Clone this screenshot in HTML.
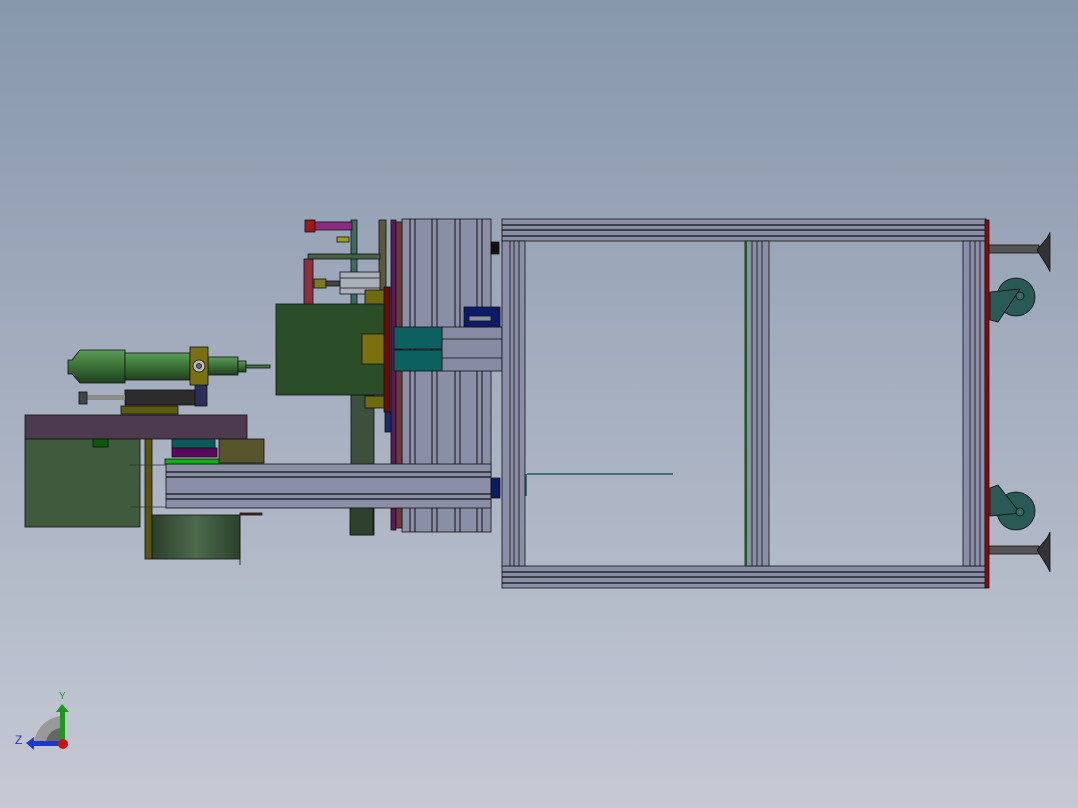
<!DOCTYPE html>
<html><head><style>
html,body{margin:0;padding:0;width:1078px;height:808px;overflow:hidden}
body{background:linear-gradient(180deg,#8797ac 0%,#a3adbe 45%,#c5c9d4 100%);font-family:"Liberation Sans",sans-serif}
svg{position:absolute;left:0;top:0}
</style></head><body>
<svg width="1078" height="808" viewBox="0 0 1078 808" stroke="#111" stroke-width="0.8">
<defs>
<linearGradient id="cyl" x1="0" y1="0" x2="0" y2="1"><stop offset="0" stop-color="#5e9a5a"/><stop offset="0.4" stop-color="#3f7a3c"/><stop offset="1" stop-color="#1f3f1f"/></linearGradient>
<linearGradient id="box" x1="0" y1="0" x2="1" y2="0"><stop offset="0" stop-color="#2c3f2c"/><stop offset="0.5" stop-color="#4d6a4c"/><stop offset="1" stop-color="#2c402c"/></linearGradient>
</defs>
<!-- top-left parts -->
<rect x="351" y="220" width="6" height="175" fill="#3e6a60"/>
<rect x="379" y="220" width="7" height="70" fill="#5a5a3a"/>
<rect x="312" y="222" width="40" height="8" fill="#8a2a80"/>
<rect x="305" y="220" width="10" height="12" fill="#9a1a1a"/>
<rect x="337" y="237" width="12" height="5" fill="#a0a020"/>
<rect x="308" y="254" width="72" height="5" fill="#466046"/>
<rect x="304" y="259" width="9" height="46" fill="#8a3040"/>
<rect x="340" y="272" width="40" height="22" fill="#aab0b8"/>
<line x1="340" y1="278" x2="380" y2="278"/><line x1="340" y1="288" x2="380" y2="288"/>
<rect x="314" y="279" width="12" height="9" fill="#7a7a20"/>
<rect x="326" y="281" width="14" height="5" fill="#444"/>
<!-- dark green vertical -->
<rect x="351" y="395" width="23" height="140" fill="#3d4f3d"/>
<!-- central column -->
<rect x="402" y="219" width="89" height="313" fill="#8a8ea6"/>
<g stroke-width="1">
<line x1="410" y1="219" x2="410" y2="532"/><line x1="415" y1="219" x2="415" y2="532"/>
<line x1="432" y1="219" x2="432" y2="532"/><line x1="437" y1="219" x2="437" y2="532"/>
<line x1="455" y1="219" x2="455" y2="532"/><line x1="460" y1="219" x2="460" y2="532"/>
<line x1="477" y1="219" x2="477" y2="532"/><line x1="482" y1="219" x2="482" y2="532"/>
</g>
<rect x="391" y="220" width="5" height="310" fill="#5a1a5a"/>
<rect x="396" y="222" width="6" height="306" fill="#6a3a3a"/>
<rect x="491" y="242" width="8" height="12" fill="#111"/>
<!-- green block -->
<rect x="276" y="304" width="109" height="91" fill="#2b4e28"/>
<rect x="365" y="290" width="20" height="14" fill="#6e6a10"/>
<rect x="362" y="334" width="23" height="30" fill="#7a7010"/>
<rect x="365" y="396" width="20" height="12" fill="#6e6a10"/>
<rect x="384" y="287" width="6" height="125" fill="#6a0c0c"/>
<rect x="385" y="412" width="6" height="20" fill="#1a2a6a"/>
<!-- teal -->
<rect x="442" y="327" width="60" height="44" fill="#868aa2"/>
<line x1="442" y1="339" x2="502" y2="339"/><line x1="442" y1="358" x2="502" y2="358"/>
<rect x="394" y="327" width="48" height="22" fill="#0c6060"/>
<rect x="394" y="350" width="48" height="21" fill="#0c6060"/>
<rect x="464" y="307" width="36" height="20" fill="#0c1a6a"/>
<rect x="469" y="316" width="22" height="5" fill="#8a8ea6"/>
<!-- horizontal beam -->
<rect x="166" y="464" width="325" height="44" fill="#8a8ea6"/>
<g stroke-width="1.3"><line x1="166" y1="472" x2="491" y2="472"/><line x1="166" y1="477" x2="491" y2="477"/>
<line x1="166" y1="494" x2="491" y2="494"/><line x1="166" y1="499" x2="491" y2="499"/></g>
<rect x="491" y="478" width="9" height="20" fill="#0c1a6a"/>
<line x1="527" y1="474" x2="673" y2="474" stroke="#1e5a5a" stroke-width="1.5"/>
<line x1="526" y1="474" x2="526" y2="496" stroke="#1e5a5a" stroke-width="1.5"/>
<rect x="350" y="508" width="23" height="27" fill="#2e402e"/>
<!-- left assembly -->
<rect x="25" y="415" width="222" height="24" fill="#4e3a4e"/>
<rect x="25" y="439" width="115" height="88" fill="#3f5a3c"/>
<rect x="93" y="439" width="15" height="8" fill="#0a5a0a"/>
<rect x="145" y="439" width="7" height="120" fill="#5a5610"/>
<rect x="152" y="515" width="88" height="44" fill="url(#box)"/>
<line x1="240" y1="515" x2="240" y2="565"/>
<rect x="240" y="513" width="22" height="2" fill="#5a2a1a"/>
<rect x="219" y="439" width="45" height="24" fill="#55542a"/>
<rect x="172" y="439" width="43" height="9" fill="#0a5a5a"/>
<rect x="172" y="448" width="45" height="9" fill="#5a0a5a"/>
<rect x="165" y="459" width="54" height="5" fill="#10b010"/>
<line x1="130" y1="465" x2="166" y2="465" stroke="#333"/><line x1="130" y1="507" x2="166" y2="507" stroke="#333"/>
<!-- spindle -->
<rect x="125" y="390" width="70" height="15" fill="#2c2c2c"/>
<rect x="85" y="395" width="40" height="5" fill="#8a8a8a" stroke="none"/>
<rect x="79" y="392" width="8" height="12" fill="#444"/>
<rect x="195" y="384" width="12" height="22" fill="#2a2e5a"/>
<rect x="121" y="406" width="57" height="8" fill="#5e5a10"/>
<path d="M68 360 L72 360 L80 350 L125 350 L125 383 L80 383 L72 374 L68 374 Z" fill="url(#cyl)"/>
<rect x="125" y="353" width="65" height="27" fill="url(#cyl)"/>
<rect x="208" y="357" width="30" height="18" fill="url(#cyl)"/>
<rect x="238" y="361" width="8" height="11" fill="url(#cyl)"/>
<rect x="246" y="365" width="24" height="3" fill="#3a7a3a"/>
<rect x="190" y="347" width="18" height="38" fill="#7a7010"/>
<circle cx="199" cy="366" r="6" fill="#bbb"/><circle cx="199" cy="366" r="2.5" fill="#666"/>
<!-- frame -->
<rect x="502" y="219" width="484" height="22" fill="#8a8ea6"/>
<g stroke-width="1.3"><line x1="502" y1="225" x2="986" y2="225"/><line x1="502" y1="230" x2="986" y2="230"/><line x1="502" y1="236" x2="986" y2="236"/></g>
<rect x="502" y="566" width="484" height="22" fill="#8a8ea6"/>
<g stroke-width="1.3"><line x1="502" y1="572" x2="986" y2="572"/><line x1="502" y1="577" x2="986" y2="577"/><line x1="502" y1="583" x2="986" y2="583"/></g>
<rect x="502" y="241" width="23" height="325" fill="#8a8ea6"/>
<line x1="510" y1="241" x2="510" y2="566"/><line x1="514" y1="241" x2="514" y2="566"/><line x1="519" y1="241" x2="519" y2="566"/>
<rect x="745" y="241" width="24" height="325" fill="#8a8ea6"/>
<line x1="746" y1="241" x2="746" y2="566" stroke="#0a6a0a" stroke-width="2"/>
<line x1="752" y1="241" x2="752" y2="566"/><line x1="757" y1="241" x2="757" y2="566"/><line x1="762" y1="241" x2="762" y2="566"/>
<rect x="963" y="241" width="22" height="325" fill="#8a8ea6"/>
<line x1="970" y1="241" x2="970" y2="566"/><line x1="975" y1="241" x2="975" y2="566"/><line x1="980" y1="241" x2="980" y2="566"/>
<rect x="985" y="220" width="4" height="368" fill="#8a0a0a"/>
<!-- feet -->
<g fill="#555">
<rect x="989" y="245" width="50" height="8"/><path d="M1037 250 L1047 238 L1050 232 L1050 272 L1047 266 Z" fill="#333"/>
<rect x="989" y="546" width="50" height="8"/><path d="M1037 550 L1047 538 L1050 532 L1050 572 L1047 566 Z" fill="#333"/>
</g>
<g fill="#2a5a55">
<circle cx="1016" cy="297" r="19"/><path d="M990 292 L1020 289 L998 322 L990 320 Z"/><circle cx="1020" cy="296" r="4" fill="#3a6a65"/>
<circle cx="1016" cy="511" r="19"/><path d="M990 488 L998 485 L1020 513 L990 516 Z"/><circle cx="1020" cy="512" r="4" fill="#3a6a65"/>
</g>
<!-- triad -->
<path d="M34 744 A30 30 0 0 1 62 716 L62 744 Z" fill="#999" stroke="none"/>
<path d="M46 744 A16 16 0 0 1 62 728 L62 744 Z" fill="#666" stroke="none"/>
<rect x="60" y="710" width="5" height="34" fill="#1a9a1a" stroke="none"/>
<path d="M56 712 L62 704 L69 712 Z" fill="#1a9a1a" stroke="none"/>
<rect x="32" y="741" width="30" height="5" fill="#1a3acc" stroke="none"/>
<path d="M34 737 L26 743 L34 750 Z" fill="#1a3acc" stroke="none"/>
<circle cx="63" cy="744" r="5" fill="#d01010" stroke="none"/>
<text x="59" y="699" font-size="10" fill="#1a9a1a" stroke="none" font-family="Liberation Sans">Y</text>
<text x="15" y="744" font-size="12" fill="#1a3acc" stroke="none" font-family="Liberation Sans">Z</text>
</svg>
</body></html>
